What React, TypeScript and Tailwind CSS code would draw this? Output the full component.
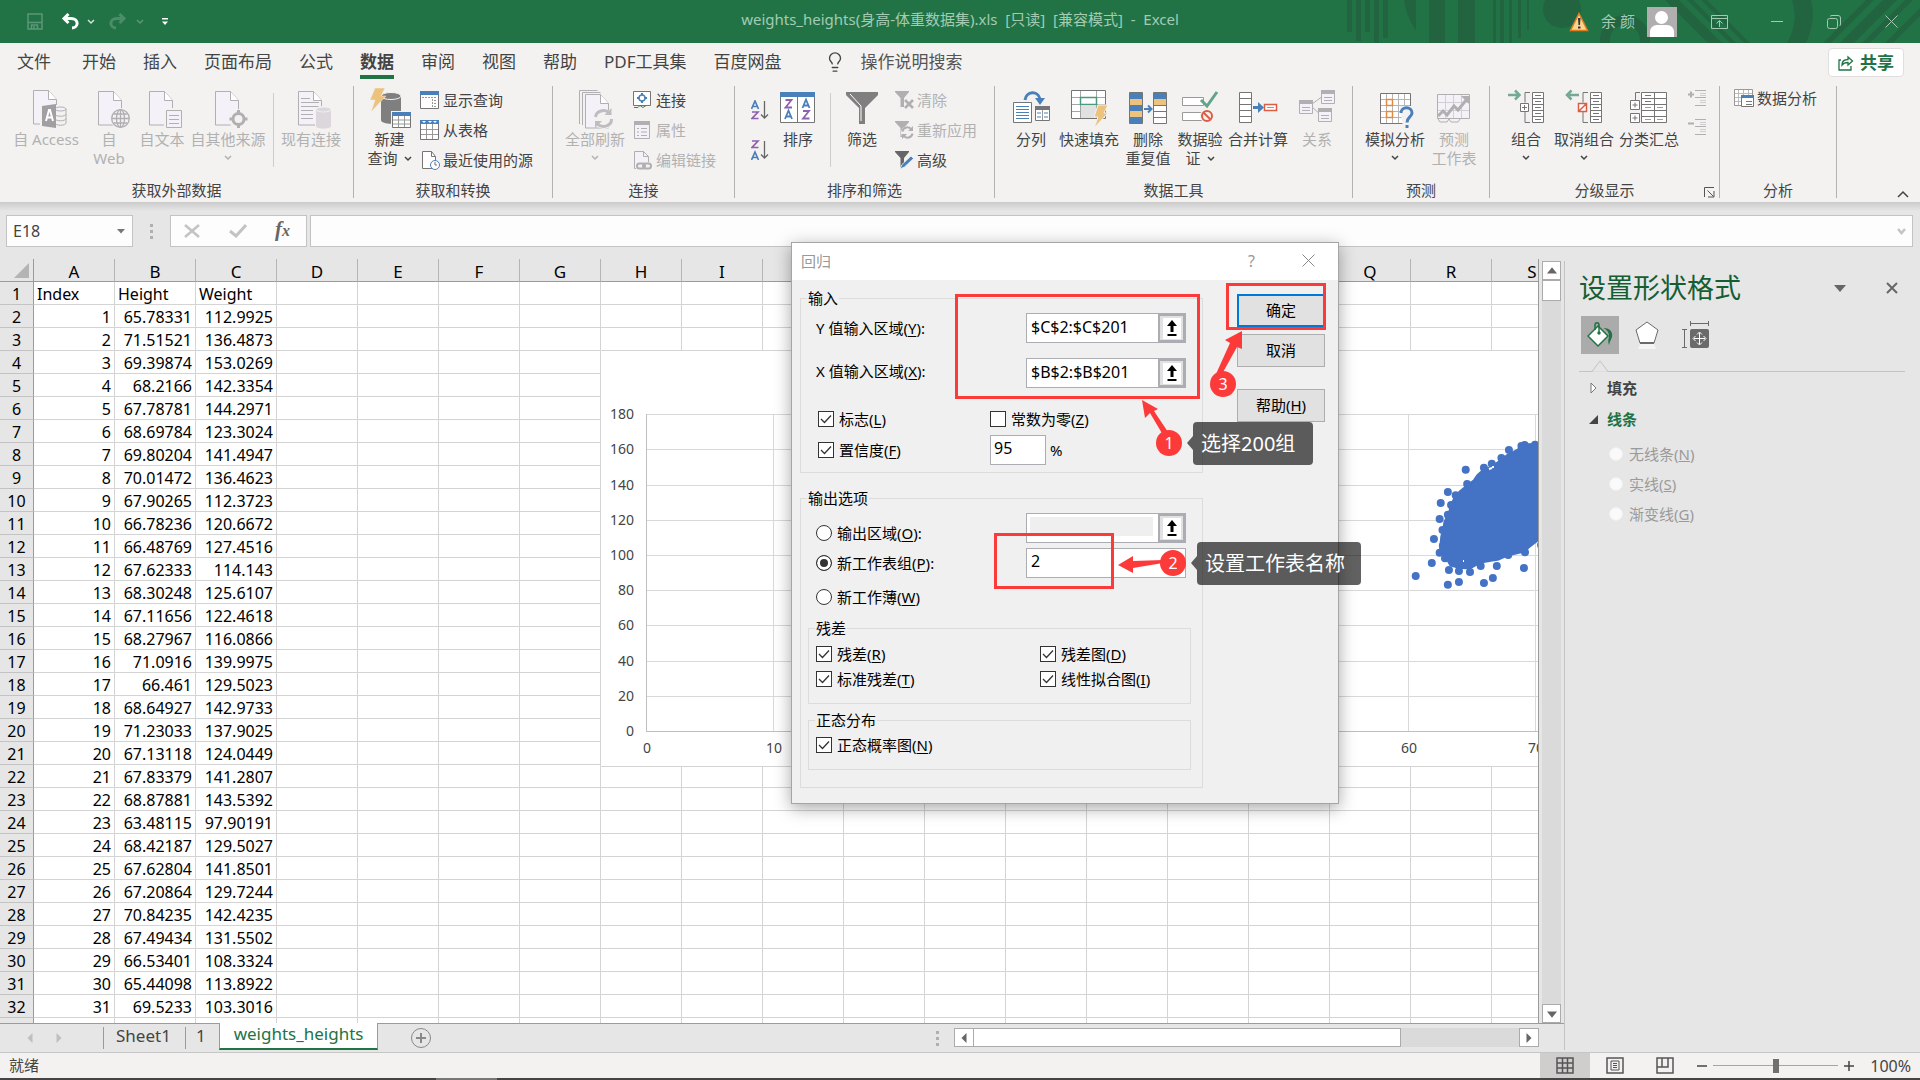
import React from "react";
import { Lightbulb } from "lucide-react";

const GREY = "#b1afb2";
const PALE = "#f5f1f8";
const INK = "#757575";
const BLUE = "#4a80ba";

const rows: string[][] = [
  ["1", "65.78331", "112.9925"], ["2", "71.51521", "136.4873"], ["3", "69.39874", "153.0269"],
  ["4", "68.2166", "142.3354"], ["5", "67.78781", "144.2971"], ["6", "68.69784", "123.3024"],
  ["7", "69.80204", "141.4947"], ["8", "70.01472", "136.4623"], ["9", "67.90265", "112.3723"],
  ["10", "66.78236", "120.6672"], ["11", "66.48769", "127.4516"], ["12", "67.62333", "114.143"],
  ["13", "68.30248", "125.6107"], ["14", "67.11656", "122.4618"], ["15", "68.27967", "116.0866"],
  ["16", "71.0916", "139.9975"], ["17", "66.461", "129.5023"], ["18", "68.64927", "142.9733"],
  ["19", "71.23033", "137.9025"], ["20", "67.13118", "124.0449"], ["21", "67.83379", "141.2807"],
  ["22", "68.87881", "143.5392"], ["23", "63.48115", "97.90191"], ["24", "68.42187", "129.5027"],
  ["25", "67.62804", "141.8501"], ["26", "67.20864", "129.7244"], ["27", "70.84235", "142.4235"],
  ["28", "67.49434", "131.5502"], ["29", "66.53401", "108.3324"], ["30", "65.44098", "113.8922"],
  ["31", "69.5233", "103.3016"], ["", "", ""],
];
const columns = "ABCDEFGHIJKLMNOPQRS".split("");

function Chevron({ className = "" }: { className?: string }) {
  return (
    <svg width="8" height="6" viewBox="0 0 8 6" className={className} fill="none" stroke="currentColor" strokeWidth="1.5">
      <path d="M1 1l3 3 3-3" />
    </svg>
  );
}

/* ---------- ribbon icons ---------- */

function Doc({ x = 7, y = 3, h = 34 }: { x?: number; y?: number; h?: number }) {
  return (
    <g transform={`translate(${x} ${y})`} fill={PALE} stroke={GREY}>
      <path d={`M.5.5h15l8 9V${h}H.5z`} />
      <path d="M15.5.5v9h8" fill="#fff" />
    </g>
  );
}

const AccessIcon = (
  <>
    <Doc x={7} y={2} />
    <path d="M14 17h26v23H14z" fill="#f3f2f1" />
    <g fill="none" stroke={GREY}>
      <ellipse cx="34.500" cy="21" rx="5.500" ry="2" fill={PALE} />
      <path d="M29 21v14c0 3 11 3 11 0V21M29 26c0 3 11 3 11 0M29 30.500c0 3 11 3 11 0" fill="none" />
    </g>
    <path d="M16 18l14-2v24l-14-2z" fill="#a19fa1" />
    <path d="M20 33l3-11h1l3 11M21 29.500h5" fill="none" stroke="#fff" strokeWidth="2" />
  </>
);
const WebIcon = (
  <>
    <Doc x={9} y={3} />
    <circle cx="32" cy="30.500" r="10.500" fill="#f3f2f1" />
    <g fill="none" stroke={GREY} strokeWidth="1.300">
      <circle cx="31.500" cy="30.500" r="8.800" />
      <ellipse cx="31.500" cy="30.500" rx="4" ry="8.800" />
      <path d="M31.500 22v17M23 30.500h17M24.500 26h14M24.500 35h14" />
    </g>
  </>
);
const TextIcon = (
  <>
    <Doc x={7} y={3} />
    <path d="M22 20h19v20H22z" fill="#f3f2f1" />
    <path d="M24.500 22.500h15v17h-15z" fill={PALE} stroke={GREY} />
    <path d="M27 27.500h10M27 31.500h10M27 35.500h10" stroke={GREY} />
  </>
);
const SourceIcon = (
  <>
    <Doc x={7} y={3} />
    <circle cx="30.500" cy="31" r="10" fill="#f3f2f1" />
    <circle cx="30.500" cy="31" r="5.500" fill="none" stroke={GREY} strokeWidth="3" />
    <path d="M30.500 22v4M30.500 36v4M21.500 31h4M35.500 31h4" stroke={GREY} strokeWidth="3" />
  </>
);
const ExistingIcon = (
  <>
    <Doc x={7} y={3} />
    <path d="M10 10.500h9M10 14.500h18M10 18.500h18M10 22.500h12M10 26.500h12M10 30.500h12" stroke={GREY} />
    <path d="M24 21c0-4 17-4 17 0v17c0 4-17 4-17 0z" fill="#f3f2f1" />
    <path d="M25 22v16c0 3.500 15 3.500 15 0V22z" fill="#dbd7dc" />
    <ellipse cx="32.500" cy="21.500" rx="7.500" ry="2.500" fill="#dbd7dc" stroke="#f3f2f1" />
  </>
);
const NewQueryIcon = (
  <>
    <path d="M11 8v24c0 5 20 5 20 0V8z" fill="#7f7f7f" />
    <ellipse cx="21" cy="8" rx="10" ry="3.500" fill="#7f7f7f" stroke="#f3f2f1" />
    <path d="M5 0h10l-4 8h5L1 24l4-12H0z" fill="#ecc27c" stroke="#f3f2f1" strokeWidth=".5" />
    <path d="M21 23h20v18H21z" fill="#f3f2f1" />
    <path d="M22.500 24.500h18v15h-18z" fill="#fff" stroke={INK} />
    <path d="M22 24h19v4H22z" fill={BLUE} />
    <path d="M23 32h17M23 36h17M28.500 28v11M34.500 28v11" stroke="#999" />
  </>
);
const RefreshArrows = (
  <g fill="none" stroke="#bfbdc0" strokeWidth="3">
    <path d="M20.500 29a8 7 0 0 1 14-4M36.500 31a8 7 0 0 1-14 5" />
    <path d="M36.500 20v7h-7zM20 40v-7h7z" fill="#bfbdc0" stroke="none" />
  </g>
);
const RefreshAllIcon = (
  <>
    <path d="M4.500 36V2.500h18M7.500 37V4.500h18" fill="none" stroke={GREY} />
    <Doc x={10} y={6} />
    <circle cx="29" cy="31" r="10" fill="#f3f2f1" />
    {RefreshArrows}
  </>
);
const SortIcon = (
  <>
    <path d="M2.500 4.500h34v30h-34z" fill="#fff" stroke={INK} />
    <path d="M2 4h35v5H2z" fill={BLUE} />
    <path d="M19.500 9v25" stroke={INK} />
    <g fill="none" strokeWidth="1.800">
      <path d="M7.500 12h6l-6 7.500h6.500M25 23h6l-6 7.500h6.500" stroke="#8f5fb0" />
      <path d="M7 31l3.500-8.500L14 31M8.500 28.500h4.500M24.500 20l3.500-8.500 3.500 8.500M26 17.500h4.500" stroke={BLUE} />
    </g>
  </>
);
const FilterIcon = (
  <>
    <path d="M4 4h32v3L23 20v16h-6V20L4 7z" fill="#7f7f7f" />
    <path d="M8 6l11 12v15" fill="none" stroke="#fff" />
  </>
);
const SplitIcon = (
  <>
    <path d="M2.500 14.500h18v20h-18z" fill="#fff" stroke={INK} />
    <path d="M5 18.500h13M5 21.500h13M5 24.500h13M5 27.500h13M5 30.500h13" stroke={BLUE} />
    <path d="M24.500 18.500h14v14h-14z" fill="#fff" stroke={INK} />
    <path d="M24 18h15v4H24z" fill={INK} />
    <path d="M26 25h4M33 25h4M26 29h4M33 29h4" stroke={BLUE} />
    <path d="M31.500 22v10" stroke="#999" />
    <path d="M14 12c1-9 13-10 15-1" fill="none" stroke={BLUE} strokeWidth="3" />
    <path d="M24 10h10l-5 7z" fill={BLUE} />
  </>
);
const FlashIcon = (
  <>
    <path d="M2.500 2.500h34v28h-34z" fill="#fff" stroke={INK} />
    <path d="M3 9.500h33M3 16.500h33M3 23.500h33M11.500 3v27M27.500 3v27" stroke="#a5a5a5" />
    <path d="M11.500 9.500h16v7h-16z" fill="#fff" stroke="#4a9a7c" strokeWidth="1.500" />
    <path d="M12 18h15v12H12z" fill="#e1e1e1" />
    <path d="M29 17h10l-4 8h4L25 40l4-11h-4z" fill="#ecc27c" stroke="#f3f2f1" />
  </>
);
const DedupeIcon = (
  <>
    <path d="M1.500 4.500h13v31h-13z" fill={BLUE} stroke={INK} />
    <path d="M2 11h12v6H2zM2 23h12v6H2z" fill="#ecc27c" />
    <path d="M25.500 4.500h13v31h-13z" fill="#fff" stroke={INK} />
    <path d="M26 5h12v6H26z" fill={BLUE} />
    <path d="M26 11h12v6H26z" fill="#ecc27c" />
    <path d="M26 17.500h12M26 23.500h12M26 29.500h12" stroke={INK} />
    <path d="M16 21h7M20 17.500l3.500 3.500-3.500 3.500" fill="none" stroke={BLUE} strokeWidth="2" />
  </>
);
const ValidateIcon = (
  <>
    <path d="M2.500 9.500h21v8h-21zM2.500 24.500h21v8h-21z" fill="#fff" stroke="#9a9a9a" />
    <path d="M21 12l6 6L37 4" fill="none" stroke="#62a48a" strokeWidth="3" />
    <circle cx="27" cy="28" r="7" fill="#f3f2f1" />
    <circle cx="27" cy="28" r="5" fill="none" stroke="#dc5d44" strokeWidth="2" />
    <path d="M23.500 24.500l7 7" stroke="#dc5d44" strokeWidth="2" />
  </>
);
const ConsolidateIcon = (
  <>
    <path d="M1.500 4.500h12v30h-12z" fill="#fff" stroke={INK} />
    <path d="M2 10.500h11M2 16.500h11M2 22.500h11M2 28.500h11" stroke={INK} />
    <path d="M15 19.500h7" stroke={BLUE} strokeWidth="3" />
    <path d="M20 14l6 5.500-6 5.500z" fill={BLUE} />
    <path d="M26.500 16.500h12v6h-12z" fill="#fff" stroke="#dc5d44" strokeWidth="1.500" />
    <path d="M29 19.500h7" stroke="#999" />
  </>
);
const RelationIcon = (
  <>
    <path d="M15 16L26 8M15 19l9 8" stroke={GREY} />
    {[[24, 2], [2, 12], [21, 20]].map(([x, y]) => (
      <g key={x} transform={`translate(${x} ${y})`}>
        <path d="M.5.5h13v13H.5z" fill={PALE} stroke={GREY} />
        <path d="M0 0h14v4H0z" fill={GREY} />
        <path d="M3 7.500h8M3 10.500h8" stroke={GREY} />
      </g>
    ))}
  </>
);
const WhatIfIcon = (
  <>
    <path d="M5.500 5.500h30v30h-30z" fill="#fff" stroke={INK} />
    <path d="M6 11.500h29M6 17.500h29M6 23.500h29M6 29.500h29M11.500 6v29M17.500 6v29M23.500 6v29M29.500 6v29" stroke="#b5b5b5" />
    <path d="M11.500 11.500h6v6h-6zM11.500 23.500h6v6h-6z" fill="#fff" stroke="#e58a3c" strokeWidth="1.500" />
    <path d="M25 18h14v22H28z" fill="#f3f2f1" />
    <path d="M26 25c0-7 11-7 11 0 0 4-5 4-5 9.500" fill="none" stroke={BLUE} strokeWidth="3" />
    <path d="M30.500 37h3v3h-3z" fill={BLUE} />
  </>
);
const ForecastIcon = (
  <>
    <path d="M3.500 6.500h32v24h-32z" fill={PALE} stroke={GREY} />
    <path d="M4 14.500h31M4 22.500h31M11.500 7v23M19.500 7v23M27.500 7v23" stroke="#d3d0d5" />
    <path d="M4 28l5-5 4 4 7-9 4 4 9-11" fill="none" stroke={GREY} strokeWidth="3" />
    <path d="M27 8h8v8z" fill={GREY} />
    <path d="M4 31l2 3h7l2-3 2 3h7l2-3" fill="none" stroke={GREY} />
  </>
);
const OutlineTable = ({ x }: { x: number }) => (
  <>
    <path d={`M${x}.5 4.500h11v30h-11z`} fill="#fff" stroke={INK} />
    <path d={`M${x} 10.500h12M${x} 16.500h12M${x} 22.500h12M${x} 28.500h12`} stroke={INK} />
    <path d={`M${x + 3} 7.500h6M${x + 3} 13.500h6M${x + 3} 19.500h6M${x + 3} 25.500h6M${x + 3} 31.500h6`} stroke={BLUE} />
  </>
);
const GroupIcon = (
  <>
    <OutlineTable x={26} />
    <path d="M24 4.500h-5v10M19 24v10.500h5" fill="none" stroke={INK} />
    <path d="M14.500 15.500h8v8h-8z" fill="#fff" stroke={INK} />
    <path d="M16 19.500h5M18.500 17v5" stroke={INK} />
    <path d="M2 7h11M9 2.500L13.500 7 9 11.500" fill="none" stroke="#74a995" strokeWidth="2.500" />
  </>
);
const UngroupIcon = (
  <>
    <OutlineTable x={26} />
    <path d="M24 4.500h-5v10M19 24v10.500h5" fill="none" stroke={INK} />
    <path d="M14.500 15.500h8v8h-8zM15 23l7-7" fill="#fff" stroke="#dc5d44" strokeWidth="1.500" />
    <path d="M15 7H4M7.500 2.500L3 7l4.500 4.500" fill="none" stroke="#74a995" strokeWidth="2.500" />
  </>
);
const SubtotalIcon = (
  <>
    <path d="M12.500 4.500h25v30h-25z" fill="#fff" stroke={INK} />
    <path d="M13 10.500h24M13 16.500h24M13 22.500h24M13 28.500h24M25.500 5v29" stroke={INK} />
    <path d="M16 7.500h6M16 13.500h6" stroke={BLUE} />
    <path d="M16 19.500h6M28 19.500h6M16 31.500h6M28 31.500h6" stroke="#e58a3c" />
    <path d="M11 4.500H6.500V12" fill="none" stroke={INK} />
    <path d="M1.500 12.500h9v9h-9zM1.500 25.500h9v9h-9z" fill="#fff" stroke={INK} />
    <path d="M3.500 17h5M6 14.500v5M3.500 30h5M6 27.500v5" stroke={INK} />
  </>
);

/* ---------- ribbon building blocks ---------- */

function Big({ icon, lines, w, off, drop }: { icon: React.ReactNode; lines: string[]; w: string; off?: boolean; drop?: "below" | "inline" }) {
  return (
    <button disabled={off} className={`flex shrink-0 flex-col items-center pt-0.5 ${w} ${off ? "text-[#b1b1b1]" : "text-[#444]"}`}>
      <svg width="40" height="42" viewBox="0 0 40 42" className="shrink-0 overflow-visible">{icon}</svg>
      {lines.map((l, i) => (
        <span key={l} className="flex items-center gap-1.5 whitespace-nowrap leading-[19px]">
          {l}
          {drop === "inline" && i === lines.length - 1 && <Chevron />}
        </span>
      ))}
      {drop === "below" && <Chevron className="mt-1.5" />}
    </button>
  );
}
function Small({ icon, label, off, h = "h-[30px]" }: { icon: React.ReactNode; label: string; off?: boolean; h?: string }) {
  return (
    <button disabled={off} className={`flex items-center gap-[3px] pb-0.5 whitespace-nowrap ${h} ${off ? "text-[#b1b1b1]" : "text-[#444]"}`}>
      <svg width="20" height="20" viewBox="0 0 20 20" className="shrink-0">{icon}</svg>
      {label}
    </button>
  );
}
function Group({ label, w, pad, children, launcher }: { label: string; w: string; pad: string; children: React.ReactNode; launcher?: boolean }) {
  return (
    <section className={`relative flex h-[112px] shrink-0 flex-col border-r border-[#b5b3b1] ${w}`}>
      <div className={`flex flex-1 ${pad}`}>{children}</div>
      <h2 className="text-center leading-4 text-[#444]">{label}</h2>
      {launcher && (
        <button aria-label="分级显示设置" className="absolute right-1 bottom-0">
          <svg width="11" height="11" viewBox="0 0 11 11" fill="none" stroke="#555"><path d="M.5 10V.500H10M3.500 3.500l6 6M10 4v6H4" /></svg>
        </button>
      )}
    </section>
  );
}
const Divider = ({ className = "" }: { className?: string }) => <div className={`mt-[7px] h-[74px] w-px shrink-0 bg-[#cfcdcc] ${className}`} />;

function AZ({ up, label }: { up?: boolean; label: string }) {
  return (
    <button aria-label={label}>
      <svg width="18" height="20" viewBox="0 0 18 20" fill="none" strokeWidth="1.700">
        <g transform={up ? "translate(0 11)" : undefined}><path d="M.500 9L4 1l3.500 8M2 6.500h4" stroke={BLUE} /></g>
        <g transform={up ? "translate(0 -11)" : undefined}><path d="M1 12h6l-6 6.500h6.500" stroke="#8f5fb0" /></g>
        <path d="M13.500 1v17M10 14.500l3.500 3.500 3.500-3.500" stroke="#666" strokeWidth="1.300" />
      </svg>
    </button>
  );
}

const funnel = (c: string) => <path d="M1 1h14v1L10 8v9H6.500V8L1 2z" fill={c} />;

function TitleBar() {
  return (
    <header className="relative flex h-[43px] shrink-0 items-center overflow-hidden bg-[#217346] text-[#a3cbb3]">
      <svg width="580" height="43" viewBox="1340 0 580 43" className="absolute top-0 right-0" fill="#226340">
        <path d="M1347 0h5v32h-5zM1356 0h5v41h-5zM1365 0h5v32h-5zM1374 0h5v43h-5zM1383 0h5v38h-5zM1404 0h12v30c-6-8-10-18-12-30zM1429 0h16v43h-16zM1458 0h17v43h-17zM1493 0h3v43h-3zM1500 0h4v43h-4zM1509 0h3v43h-3zM1518 0h3v38h-3zM1527 0h2v30h-2z" />
        <circle cx="1562" cy="9" r="19" />
        <circle cx="1625" cy="40" r="20" fill="none" stroke="#226340" strokeWidth="10" />
        <path d="M1665 0h14l43 43h-14zM1687 0h6l43 43h-6zM1701 0h6l43 43h-6z" />
        <path d="M1792 0h19c4 16 1 30-5 43h-19c8-14 10-28 5-43zM1883 0h14l-43 43h-14zM1866 0h8l-43 43h-8zM1905 0h8l-43 43h-8zM1920 8v8l-27 27h-8z" />
      </svg>
      <div className="relative flex items-center pl-[27px]">
        <button aria-label="保存" className="text-[#5c9777]">
          <svg width="16" height="17" viewBox="0 0 16 17" fill="none" stroke="currentColor" strokeWidth="1.500"><path d="M1 1h14v15H1zM1 9.500h14M4.500 16v-4h6v4M7 13v3" /></svg>
        </button>
        <button aria-label="撤消" className="ml-[18px] text-white">
          <svg width="18" height="17" viewBox="0 0 18 17" fill="none" stroke="currentColor" strokeWidth="3"><path d="M3 5.500h7c8 0 8 9 1 9.500M7.500 1L3 5.500 7.500 10" /></svg>
        </button>
        <Chevron className="ml-2 text-[#cfe3d7]" />
        <button aria-label="恢复" className="ml-[14px] text-[#4b8c69]">
          <svg width="18" height="17" viewBox="0 0 18 17" fill="none" stroke="currentColor" strokeWidth="3"><path d="M15 5.500H8c-8 0-8 9-1 9.500M10.500 1L15 5.500 10.500 10" /></svg>
        </button>
        <Chevron className="ml-[9px] text-[#5c9777]" />
        <button aria-label="自定义快速访问工具栏" className="ml-[18px]">
          <svg width="6" height="7" viewBox="0 0 6 7" fill="#fff"><path d="M0 0h6v1.500H0zM0 3.500h6L3 7z" /></svg>
        </button>
      </div>
      <h1 className="absolute inset-x-0 top-0 text-center text-[15px] leading-[38px] whitespace-pre">weights_heights(身高-体重数据集).xls  [只读]  [兼容模式]  -  Excel</h1>
      <div className="relative ml-auto flex items-center pr-[22px]">
        <svg width="20" height="20" viewBox="0 0 20 20"><path d="M10 1.500l8.500 17h-17z" fill="#fbd58b" stroke="#e07b1f" strokeWidth="1.500" /><path d="M9 6h2.500l-.5 7H9.500zM9 14.500h2.500v2H9z" fill="#333" /></svg>
        <span className="ml-3 text-[15px]">余 颜</span>
        <svg width="30" height="30" viewBox="0 0 30 30" className="ml-3"><path d="M0 0h30v30H0z" fill="#b0aeae" /><circle cx="14.500" cy="10.500" r="6.500" fill="#fff" /><path d="M3 30V25c0-4 3-7 7-7h10c4 0 7 3 7 7v5z" fill="#fff" /></svg>
        <button aria-label="功能区显示选项" className="ml-[34px]">
          <svg width="17" height="14" viewBox="0 0 17 14" fill="none" stroke="currentColor"><path d="M.500.500h16v13H.500zM.500 3.500h16M8.500 12V6M5.500 8.500l3-3 3 3" /></svg>
        </button>
        <button aria-label="最小化" className="ml-[43px]"><svg width="12" height="12" viewBox="0 0 12 12" stroke="currentColor"><path d="M0 5.500h12" /></svg></button>
        <button aria-label="还原" className="ml-11">
          <svg width="14" height="14" viewBox="0 0 14 14" fill="none" stroke="currentColor"><rect x=".5" y="3.500" width="10" height="10" rx="2" /><path d="M3 1.500c.5-.7 1-1 2-1h6c1.500 0 2.500 1 2.500 2.500v6c0 1-.3 1.500-1 2" /></svg>
        </button>
        <button aria-label="关闭" className="ml-11"><svg width="13" height="13" viewBox="0 0 13 13" stroke="currentColor"><path d="M.500.500l12 12M12.500.500l-12 12" /></svg></button>
      </div>
    </header>
  );
}

function Tabs() {
  const tabs = ["开始", "插入", "页面布局", "公式", "数据", "审阅", "视图", "帮助", "PDF工具集", "百度网盘"];
  return (
    <nav className="flex h-[43px] shrink-0 items-start pt-[5px] text-[17px] leading-[27px] text-[#444]">
      <a href="#file" className="mr-[31px] ml-[17px]">文件</a>
      <div className="flex gap-[27px]">
        {tabs.map((t) => (
          <a key={t} href={`#${t}`} className={t === "数据" ? "border-b-4 border-[#217346] font-bold" : ""}>{t}</a>
        ))}
      </div>
      <label className="ml-[42px] flex items-center gap-[15px]">
        <Lightbulb size={22} strokeWidth={1.5} />
        <input placeholder="操作说明搜索" className="w-40 bg-transparent outline-none placeholder:text-[#555]" />
      </label>
      <button className="mr-4 ml-auto flex h-[29px] items-center gap-1.5 rounded border border-[#e1dfdd] bg-white px-[9px] font-bold text-[#217346]">
        <svg width="16" height="16" viewBox="0 0 16 16" fill="none" stroke="currentColor" strokeWidth="1.300"><path d="M3 5H1v10h12v-4M4 10c0-4 3-5.500 6-5.500V2l4.500 4L10 10V7.500C7 7.500 5.500 8 4 10z" /></svg>
        共享
      </button>
    </nav>
  );
}

function Ribbon() {
  return (
    <div className="flex shrink-0 pb-1 text-[15px]">
      <Group label="获取外部数据" w="w-[354px]" pad="pl-[10px]">
        <Big off w="w-[72px]" lines={["自 Access"]} icon={AccessIcon} />
        <Big off w="w-[54px]" lines={["自", "Web"]} icon={WebIcon} />
        <Big off w="w-[52px]" lines={["自文本"]} icon={TextIcon} />
        <Big off w="w-[80px]" lines={["自其他来源"]} icon={SourceIcon} drop="below" />
        <Divider className="mx-[5px]" />
        <Big off w="w-[64px]" lines={["现有连接"]} icon={ExistingIcon} />
      </Group>
      <Group label="获取和转换" w="w-[199px]" pad="pl-[5px]">
        <Big w="w-[61px]" lines={["新建", "查询"]} icon={NewQueryIcon} drop="inline" />
        <div>
          <Small label="显示查询" icon={<><path d="M.500 1.500h18v17H.500z" fill="#fff" stroke={INK} /><path d="M0 1h19v4H0z" fill={BLUE} /><path d="M2 7.500h15M12.500 9v9M14 10.500h3M14 13.500h3M14 16.500h3" stroke="#999" strokeDasharray="2 1" /></>} />
          <Small label="从表格" icon={<><path d="M.500.500h18v19H.500z" fill="#fff" stroke={INK} /><path d="M0 0h19v4H0z" fill={BLUE} /><path d="M2 1h4L4 3zM8 1h4l-2 2zM13 1h4l-2 2z" fill="#fff" /><path d="M1 9.500h17M1 14.500h17M6.500 4v15M12.500 4v15" stroke="#999" /></>} />
          <Small label="最近使用的源" icon={<><path d="M2.500 1.500h9l4 5v12h-13z" fill="#fff" stroke={INK} /><path d="M11.500 1.500v5h4" fill="none" stroke={INK} /><circle cx="15" cy="15" r="4.500" fill="#fff" stroke={BLUE} /><path d="M15 12v3h2" fill="none" stroke={INK} /></>} />
        </div>
      </Group>
      <Group label="连接" w="w-[182px]" pad="pl-[6px]">
        <Big off w="w-[72px]" lines={["全部刷新"]} icon={RefreshAllIcon} drop="below" />
        <div className="ml-0.5">
          <Small label="连接" icon={<><path d="M.500 1.500h17v14H.500z" fill="#fff" stroke={INK} /><path d="M1 17.500h4l2-2 3 2 3-2" fill="none" stroke="#4f7d57" /><circle cx="9" cy="8" r="3" fill="none" stroke={BLUE} strokeWidth="1.500" /><path d="M9 3v2M9 11v2M4 8h2M12 8h2" stroke={BLUE} strokeWidth="2" /></>} />
          <Small off label="属性" icon={<><path d="M1.500 1.500h15v17h-15z" fill={PALE} stroke={GREY} /><path d="M1 1h16v4H1z" fill={GREY} /><path d="M8 8.500h6M8 12h6M8 15.500h6M4 8.500h2M4 12h2M4 15.500h2" stroke={GREY} /></>} />
          <Small off label="编辑链接" icon={<><path d="M1.500 1.500h9l5 5v12h-14z" fill={PALE} stroke={GREY} /><path d="M10.500 1.500v5h5" fill="none" stroke={GREY} /><path d="M3 12h16v8H3z" fill="#f3f2f1" /><rect x="4" y="13.500" width="8" height="5" rx="2.500" fill="none" stroke={GREY} strokeWidth="2" /><rect x="10" y="13.500" width="8" height="5" rx="2.500" fill="none" stroke={GREY} strokeWidth="2" /></>} />
        </div>
      </Group>
      <Group label="排序和筛选" w="w-[260px]" pad="pl-[16px]">
        <div className="flex flex-col gap-5 pt-3.5"><AZ label="升序" /><AZ up label="降序" /></div>
        <Big w="w-[58px]" lines={["排序"]} icon={SortIcon} />
        <Divider className="mx-[3px]" />
        <Big w="w-[56px]" lines={["筛选"]} icon={FilterIcon} />
        <div className="ml-1">
          <Small off label="清除" icon={<>{funnel(GREY)}<path d="M10 10h9v9h-9z" fill="#f3f2f1" /><path d="M11 10l8 8M19 10l-8 8" stroke={GREY} strokeWidth="2.500" /></>} />
          <Small off label="重新应用" icon={<>{funnel(GREY)}<circle cx="13.500" cy="12.500" r="6.500" fill="#f3f2f1" /><path d="M8.500 11.500a5 5 0 0 1 9-2M18.500 13.500a5 5 0 0 1-9 2" fill="none" stroke={GREY} strokeWidth="2" /><path d="M19 6v5h-5zM8 19v-5h5z" fill={GREY} /></>} />
          <Small label="高级" icon={<>{funnel("#666")}<path d="M6 19l2-4.500L17 6l2.500 2.500L10.500 17z" fill={BLUE} stroke="#f3f2f1" strokeWidth=".8" /></>} />
        </div>
      </Group>
      <Group label="数据工具" w="w-[358px]" pad="pl-[11px]">
        <Big w="w-[50px]" lines={["分列"]} icon={SplitIcon} />
        <Big w="w-[66px]" lines={["快速填充"]} icon={FlashIcon} />
        <Big w="w-[52px]" lines={["删除", "重复值"]} icon={DedupeIcon} />
        <Big w="w-[52px]" lines={["数据验", "证"]} icon={ValidateIcon} drop="inline" />
        <Big w="w-[64px]" lines={["合并计算"]} icon={ConsolidateIcon} />
        <Big off w="w-[54px]" lines={["关系"]} icon={RelationIcon} />
      </Group>
      <Group label="预测" w="w-[137px]" pad="pl-[10px]">
        <Big w="w-[64px]" lines={["模拟分析"]} icon={WhatIfIcon} drop="below" />
        <Big off w="w-[54px]" lines={["预测", "工作表"]} icon={ForecastIcon} />
      </Group>
      <Group label="分级显示" w="w-[230px]" pad="pl-[10px]" launcher>
        <Big w="w-[52px]" lines={["组合"]} icon={GroupIcon} drop="below" />
        <Big w="w-[64px]" lines={["取消组合"]} icon={UngroupIcon} drop="below" />
        <Big w="w-[66px]" lines={["分类汇总"]} icon={SubtotalIcon} />
        <div className="ml-1.5 flex flex-col gap-[13px] pt-1">
          {[true, false].map((plus) => (
            <button key={String(plus)} disabled aria-label={plus ? "显示明细数据" : "隐藏明细数据"}>
              <svg width="18" height="16" viewBox="0 0 18 16" stroke={GREY}>
                <path d="M7 .500h11M7 7.500h11M7 15.500h11" /><path d="M12 3.500h6M12 5.500h6M12 10.500h6M12 12.500h6" stroke="#cfcdd0" />
                <path d={plus ? "M0 4.500h6M3 1.500v6" : "M0 4.500h6"} strokeWidth="2" />
              </svg>
            </button>
          ))}
        </div>
      </Group>
      <Group label="分析" w="w-[117px]" pad="pl-[14px]">
        <Small h="h-[26px]" label="数据分析" icon={<><path d="M.500 1.500h18v16H.500z" fill="#fff" stroke="#999" /><path d="M1 5.500h17M1 9.500h17M1 13.500h17M4.500 2v15M9.500 2v15M14.500 2v15" stroke="#bbb" /><path d="M7.500 7.500h12v11h-12z" fill="#fff" stroke={INK} /><path d="M7 7h13v3H7z" fill={BLUE} /><path d="M12 13.500h6M12 16.500h6" stroke="#777" /></>} />
      </Group>
      <button aria-label="折叠功能区" className="mr-[11px] ml-auto self-end text-[#444]">
        <svg width="12" height="8" viewBox="0 0 12 8" fill="none" stroke="currentColor" strokeWidth="1.500"><path d="M1 7l5-5 5 5" /></svg>
      </button>
    </div>
  );
}

function FormulaBar() {
  return (
    <div className="flex h-[57px] shrink-0 bg-[linear-gradient(#cbcbcb,#e6e6e6_9px)] pt-[13px] pr-[7px] pb-3 pl-1.5">
      <div className="flex w-[127px] items-center border border-[#c3c3c3] bg-[#fdfdfd] pr-[7px] pl-1.5">
        <input aria-label="名称框" defaultValue="E18" className="min-w-0 flex-1 bg-transparent text-base text-[#444] outline-none" />
        <svg width="8" height="5" viewBox="0 0 8 5" fill="#777"><path d="M0 0h8L4 4.500z" /></svg>
      </div>
      <div className="flex w-[37px] flex-col items-center justify-center gap-[3px]">
        {[0, 1, 2].map((i) => <span key={i} className="size-[3px] bg-[#b0b0b0]" />)}
      </div>
      <div className="flex w-[137px] items-center justify-between border border-[#c3c3c3] bg-[#fdfdfd] pr-4 pl-[13px]">
        <button aria-label="取消输入"><svg width="16" height="14" viewBox="0 0 16 14" stroke="#c3c3c3" strokeWidth="2.500"><path d="M1 1l14 12M15 1L1 13" /></svg></button>
        <button aria-label="确认输入"><svg width="18" height="14" viewBox="0 0 18 14" fill="none" stroke="#c3c3c3" strokeWidth="3"><path d="M1 7l6 5L17 1" /></svg></button>
        <button aria-label="插入函数" className="font-['Liberation_Serif',serif] text-[21px] leading-none font-bold text-[#666] italic">f<span className="text-base">x</span></button>
      </div>
      <label className="ml-[3px] flex flex-1 items-center border border-[#c3c3c3] bg-[#fdfdfd] pr-1.5">
        <input aria-label="编辑栏" className="flex-1 bg-transparent px-2 outline-none" />
        <svg width="9" height="7" viewBox="0 0 9 7" fill="none" stroke="#c3c3c3" strokeWidth="2.500"><path d="M1 1l3.500 4L8 1" /></svg>
      </label>
    </div>
  );
}

/* Scatter outline and marker centres, in chart units of 1/2.8 px by 1/3 px. */
const hull: number[][] = [[512, 672], [460, 675], [440, 692], [415, 705], [395, 722], [368, 742], [345, 752], [330, 766], [320, 782], [298, 800], [280, 816], [268, 830], [256, 855], [250, 882], [238, 905], [234, 930], [229, 950], [226, 985], [240, 1008], [254, 1035], [278, 1042], [307, 1044], [338, 1026], [370, 1020], [385, 1018], [415, 1004], [460, 993], [475, 978], [497, 960], [512, 956]];
const dots: number[][] = [[296, 749], [246, 816], [226, 849], [201, 1029], [156, 1068], [246, 1094], [277, 1086], [347, 1089], [372, 1074], [459, 1044], [461, 675], [452, 678], [417, 690], [396, 714], [369, 731], [347, 743], [300, 792], [268, 826], [255, 855], [223, 897], [246, 884], [231, 930], [207, 957], [232, 977], [223, 998], [238, 1015], [249, 1050], [277, 1053], [308, 1056], [338, 1038], [383, 1038], [415, 1005], [462, 997], [490, 674], [507, 975]];
const px = (p: number[]) => [1360 + p[0] / 2.8 - 600, 220 + p[1] / 3 - 350];

function Chart() {
  return (
    <svg width="1100" height="417" viewBox="0 0 1100 417" className="absolute top-[91px] left-[600px] bg-white font-['Noto_Sans',sans-serif] text-[14px]" fill="#444" role="img" aria-label="身高与体重散点图">
      <path d="M1100 .5H.5v416H1100" fill="none" stroke="#d4d4d4" />
      {[0, 1, 2, 3, 4, 5, 6, 7, 8, 9].map((i) => {
        const y = Math.round(381 - i * 35.2);
        return (
          <g key={i}>
            <path d={`M46 ${y}.5H1062`} stroke={i ? "#d9d9d9" : "#bfbfbf"} />
            <text x="34" y={y + 5} textAnchor="end">{i * 20}</text>
          </g>
        );
      })}
      {[0, 1, 2, 3, 4, 5, 6, 7].map((i) => (
        <g key={i}>
          <path d={`M${46 + i * 127}.5 64V381`} stroke={i ? "#d9d9d9" : "#bfbfbf"} />
          <text x={47 + i * 127} y="403" textAnchor="middle">{i * 10}</text>
        </g>
      ))}
      <path d={"M" + hull.map((p) => px(p).join(" ")).join("L") + "z"} fill="#4472c4" stroke="#4472c4" strokeWidth="3" strokeLinejoin="round" />
      {dots.map((p, i) => <circle key={i} cx={px(p)[0]} cy={px(p)[1]} r="4" fill="#4472c4" />)}
      <path d="M889 119l3-1M892 117h2M863 211h1" stroke="#fff" strokeWidth="2" />
    </svg>
  );
}

function Sheet() {
  return (
    <div className="relative min-w-0 flex-1 overflow-hidden border-r border-[#9b9b9b] bg-white">
      <table className="w-[1572px] table-fixed border-separate border-spacing-0 text-base leading-[19px] text-black">
        <thead>
          <tr className="h-[23px] bg-[#e6e6e6]">
            <th className="w-[34px] border-r border-b border-[#9b9b9b] p-0">
              <svg width="15" height="15" viewBox="0 0 15 15" className="mr-1 ml-auto block"><path d="M15 0v15H0z" fill="#b4b4b4" /></svg>
            </th>
            {columns.map((c) => <th key={c} className="w-[81px] border-r border-b border-r-[#b5b5b5] border-b-[#9b9b9b] p-0 pt-1 text-[17px] leading-[18px] font-normal">{c}</th>)}
          </tr>
        </thead>
        <tbody>
          {[["Index", "Height", "Weight"], ...rows].map((r, i) => (
            <tr key={i} className="h-[23px]">
              <th className="border-r border-b border-r-[#9b9b9b] border-b-[#c3c3c3] bg-[#e6e6e6] p-0 pt-[3px] font-normal">{i < 32 ? i + 1 : ""}</th>
              {columns.map((c, j) => (
                <td key={c} className={`border-r border-b border-[#d4d4d4] px-[3px] pt-[3px] pb-0 whitespace-nowrap ${i ? "text-right" : "text-left"}`}>{r[j] ?? ""}</td>
              ))}
            </tr>
          ))}
        </tbody>
      </table>
      <Chart />
    </div>
  );
}

const Arrow = ({ d }: { d: string }) => <svg width="10" height="10" viewBox="0 0 8 8" fill="#666"><path d={d} /></svg>;
const UP = "M0 6h8L4 1z", DOWN = "M0 2h8L4 7z", LEFT = "M6 0v8L2 4z", RIGHT = "M2 0v8l4-4z";

function VScroll() {
  return (
    <div className="mt-0.5 mr-[3px] ml-[3px] flex w-[19px] shrink-0 flex-col bg-[#dadada]">
      <button aria-label="向上滚动" className="grid h-[19px] place-items-center border border-[#ababab] bg-white"><Arrow d={UP} /></button>
      <div className="h-[21px] border border-[#ababab] bg-white" />
      <button aria-label="向下滚动" className="mt-auto grid h-[19px] place-items-center border border-[#ababab] bg-white"><Arrow d={DOWN} /></button>
    </div>
  );
}

function SheetTabs() {
  return (
    <div className="flex h-[28px] shrink-0 text-[17px] text-[#444]">
      <div className="flex w-[103px] items-center gap-[19px] pl-[25px]">
        <button aria-label="上一张" className="opacity-30"><Arrow d={LEFT} /></button>
        <button aria-label="下一张" className="opacity-30"><Arrow d={RIGHT} /></button>
      </div>
      <button className="mt-[3px] h-[22px] border-l border-[#9b9b9b] pr-[14px] pl-3 leading-5">
        <span className="relative bottom-0.5">Sheet1</span>
      </button>
      <button className="mt-[3px] h-[22px] border-l border-[#9b9b9b] pr-[13px] pl-[10px] leading-5">
        <span className="relative bottom-0.5">1</span>
      </button>
      <button className="-mt-px h-[27px] border-x border-b-2 border-x-[#9b9b9b] border-b-[#217346] bg-white px-[14px] pb-1 text-[17px] leading-5 text-[#217346]">weights_heights</button>
      <button aria-label="新工作表" className="ml-[33px] self-center">
        <svg width="20" height="20" viewBox="0 0 20 20" fill="none" stroke="#888"><circle cx="10" cy="10" r="9.500" /><path d="M5 10h10M10 5v10" strokeWidth="2" /></svg>
      </button>
      <div className="mr-[15px] ml-auto flex flex-col justify-center gap-[3px]">
        {[0, 1, 2].map((i) => <span key={i} className="size-[3px] bg-[#b0b0b0]" />)}
      </div>
      <div className="mt-1 mr-[25px] flex h-[19px] w-[585px] bg-[#dadada]">
        <button aria-label="向左滚动" className="grid w-5 place-items-center border border-[#ababab] bg-white"><Arrow d={LEFT} /></button>
        <div className="w-[427px] border-y border-r border-[#ababab] bg-white" />
        <button aria-label="向右滚动" className="ml-auto grid w-5 place-items-center border border-[#ababab] bg-white"><Arrow d={RIGHT} /></button>
      </div>
    </div>
  );
}

function Pane() {
  return (
    <aside className="my-[2px] w-[356px] shrink-0 border-l border-[#c3c3c3] pl-[14px] text-[15px]">
      <div className="flex items-center pt-[7px] pr-[22px]">
        <h2 className="text-[27px] leading-10 text-[#155e34]">设置形状格式</h2>
        <button aria-label="任务窗格选项" className="ml-auto"><svg width="12" height="7" viewBox="0 0 12 7" fill="#666"><path d="M0 0h12L6 7z" /></svg></button>
        <button aria-label="关闭窗格" className="ml-10"><svg width="12" height="12" viewBox="0 0 12 12" stroke="#666" strokeWidth="2"><path d="M1 1l10 10M11 1L1 11" /></svg></button>
      </div>
      <div className="mt-2 flex items-center gap-4 pl-0.5">
        <button aria-label="填充与线条" className="grid h-[38px] w-[38px] place-items-center bg-[#ababab]">
          <svg width="26" height="26" viewBox="0 0 26 26" fill="none" stroke="#217346" strokeWidth="1.500"><path d="M11 4l10 10-10 10L1 14z" fill="#fff" /><path d="M8 8V3c0-3 4-3 4 0v8" /><circle cx="12" cy="11" r="1" fill="#217346" /><path d="M16 6c8 0 10 5 9 9-.5 2-2 4-3 8-1-3-1-5 0-8 0-4-1-7-6-9z" fill="#217346" stroke="none" /></svg>
        </button>
        <button aria-label="效果">
          <svg width="24" height="28" viewBox="0 0 24 28" fill="#fff" stroke="#6a6a6a"><path d="M12 1l11 8-4 13H5L1 9z" /><path d="M5 23l-2 5h18l-2-5z" fill="#f4f4f4" stroke="none" /><path d="M5 22h14" strokeWidth="2" /></svg>
        </button>
        <button aria-label="大小与属性" className="ml-[7px]">
          <svg width="27" height="28" viewBox="0 0 27 28" fill="none" stroke="#6a6a6a"><path d="M9 2.500h17M8.500 0v5M26.500 0v5M2.500 9v17M0 8.500h5M0 26.500h5" /><rect x="8" y="8" width="19" height="19" rx="2" fill="#6a6a6a" stroke="none" /><path d="M12 17.500h11M17.500 12v11" stroke="#fff" /><path d="M13.500 15l-2.500 2.500 2.500 2.500M21.500 15l2.500 2.500-2.500 2.500M15 13.500l2.500-2.500 2.500 2.500M15 21.500l2.500 2.500 2.500-2.500" stroke="#fff" /></svg>
        </button>
      </div>
      <div className="relative mt-[17px] mr-[15px] h-px bg-[#c3c3c3]">
        <svg width="18" height="12" viewBox="0 0 18 12" className="absolute bottom-0 left-3 fill-[#e6e6e6] stroke-[#c3c3c3]"><path d="M1 11.500L9 1l8 10.500" /><path d="M2 12h14" className="stroke-[#e6e6e6]" /></svg>
      </div>
      <button className="mt-0.5 flex h-7 items-center gap-[10px] pl-[10px] font-bold text-[#444]">
        <svg width="8" height="12" viewBox="0 0 8 12" fill="#fff" stroke="#777"><path d="M2 1l5 5-5 5z" /></svg>填充
      </button>
      <button className="mt-[3px] flex h-7 items-center gap-[9px] pl-[10px] font-bold text-[#217346]">
        <svg width="9" height="9" viewBox="0 0 9 9" fill="#444"><path d="M9 0v9H0z" /></svg>线条
      </button>
      <div className="pt-1.5 pl-[30px]">
        {[["无线条", "N"], ["实线", "S"], ["渐变线", "G"]].map(([t, k]) => (
          <label key={k} className="flex h-[30px] items-center gap-[6px] text-[#9a9a9a]">
            <input type="radio" name="line" disabled className="size-[14px] appearance-none rounded-full border border-[#efefef] bg-[#fafafa]" />
            <span>{t}(<u>{k}</u>)</span>
          </label>
        ))}
      </div>
    </aside>
  );
}

function StatusBar() {
  return (
    <footer className="shrink-0">
      <div className="flex h-[26px] items-center border-t border-[#c6c6c6] bg-[#f3f2f1] text-[15px] text-[#444]">
        <span className="pl-[9px]">就绪</span>
        <div className="ml-auto flex h-full">
          {["普通", "页面布局", "分页预览"].map((n, i) => (
            <button key={n} aria-label={n} className={`grid w-[50px] place-items-center ${i === 0 ? "bg-[#cfcecd]" : ""}`}>
              <svg width="18" height="17" viewBox="0 0 18 17" fill="none" stroke="#555" strokeWidth="1.500">
                <path d="M1 1h16v15H1z" />
                {i === 0 && <path d="M1 6h16M1 11h16M6.500 1v15M11.500 1v15" />}
                {i === 1 && <path d="M5 4h8v9H5zM7 6.500h4M7 8.500h4M7 10.500h4" strokeWidth="1" />}
                {i === 2 && <path d="M6 1v9h6V1M1 10h5" />}
              </svg>
            </button>
          ))}
        </div>
        <button aria-label="缩小" className="ml-[7px]"><svg width="10" height="10" viewBox="0 0 10 10" stroke="#444"><path d="M0 5h10" strokeWidth="1.500" /></svg></button>
        <input aria-label="显示比例" type="range" defaultValue="50" className="mx-1.5 h-[14px] w-[125px] appearance-none bg-[linear-gradient(#a5a5a5,#a5a5a5)] bg-[length:100%_1px] bg-center bg-no-repeat [&::-webkit-slider-thumb]:h-[14px] [&::-webkit-slider-thumb]:w-[6px] [&::-webkit-slider-thumb]:appearance-none [&::-webkit-slider-thumb]:bg-[#707070]" />
        <button aria-label="放大"><svg width="10" height="10" viewBox="0 0 10 10" stroke="#444"><path d="M0 5h10M5 0v10" strokeWidth="1.500" /></svg></button>
        <span className="mr-[9px] ml-4 text-base">100%</span>
      </div>
      <div className="flex h-0.5 bg-[#474344]"><span className="ml-[436px] w-[61px] bg-[#777]" /></div>
    </footer>
  );
}

/* ---------- regression dialog ---------- */

function Mn({ t, k, s = "" }: { t: string; k: string; s?: string }) {
  return <span>{t}(<u className="underline-offset-2">{k}</u>){s}</span>;
}
function Check({ t, k, on, className = "" }: { t: string; k: string; on?: boolean; className?: string }) {
  return (
    <label className={`flex h-5 items-center gap-[5px] ${className}`}>
      <span className="grid shrink-0">
        <input type="checkbox" defaultChecked={on} className="peer size-4 appearance-none border border-[#333] bg-white [grid-area:1/1]" />
        <svg width="16" height="16" viewBox="0 0 16 16" className="pointer-events-none hidden [grid-area:1/1] peer-checked:block" fill="none" stroke="#333" strokeWidth="1.300"><path d="M3 8l3.500 3.500L13 4.500" /></svg>
      </span>
      <Mn t={t} k={k} />
    </label>
  );
}
function Radio({ t, k, s, on, className = "" }: { t: string; k: string; s?: string; on?: boolean; className?: string }) {
  return (
    <label className={`flex h-5 items-center gap-[5px] ${className}`}>
      <input type="radio" name="output" defaultChecked={on} className="size-4 appearance-none rounded-full border border-[#333] bg-white checked:bg-[#333] checked:shadow-[inset_0_0_0_3px_white]" />
      <Mn t={t} k={k} s={s} />
    </label>
  );
}
function RefInput({ id, value, off, label }: { id: string; value?: string; off?: boolean; label?: string }) {
  return (
    <div className="flex h-[30px] w-[160px] border border-[#abadb3] bg-white">
      <input id={id} aria-label={label} defaultValue={value} disabled={off} className={`min-w-0 flex-1 text-base leading-5 outline-none ${off ? "m-[3px] mr-[5px] mb-1.5 bg-[#efefef]" : "pb-0.5 pl-1"}`} />
      <button aria-label="选择区域" className="grid w-[27px] place-items-center border-2 border-[#abadb3] bg-[#e1e1e1]">
        <svg width="18" height="21" viewBox="0 0 18 21"><path d="M0 0h18v21H0z" fill="#fff" /><path d="M4 8l5-6 5 6h-3.500v6h-3V8zM4.500 16h9v2h-9z" fill="#000" /></svg>
      </button>
    </div>
  );
}
const btn = "h-[33px] border border-[#adadad] bg-[#e1e1e1] pb-0.5";
const box = "border border-[#dcdcdc]";

function RegressionDialog() {
  return (
    <div role="dialog" aria-label="回归" className="absolute top-[242px] left-[791px] w-[548px] border border-[#a5a5a5] bg-[#f0f0f0] text-[15px] leading-5 text-black shadow-[0_4px_16px_rgba(0,0,0,0.35)]">
      <div className="flex h-[37px] items-center bg-white pr-[23px] pb-0.5 pl-[9px] text-[#999]">
        <span>回归</span>
        <button aria-label="帮助" className="ml-auto text-base">?</button>
        <button aria-label="关闭" className="ml-[47px]"><svg width="13" height="13" viewBox="0 0 13 13" stroke="#888"><path d="M.500.500l12 12M12.500.500l-12 12" /></svg></button>
      </div>
      <div className="flex pt-2 pb-[15px] pl-2">
        <div className="w-[403px]">
          <fieldset className={`${box} pb-[7px] pl-[15px]`}>
            <legend className="-ml-[9px] px-px">输入</legend>
            <div className="flex items-center pt-[5px]"><label htmlFor="ref-y" className="w-[210px]"><Mn t="Y 值输入区域" k="Y" s=":" /></label><RefInput id="ref-y" value="$C$2:$C$201" /></div>
            <div className="mt-[15px] flex items-center"><label htmlFor="ref-x" className="w-[210px] pb-1"><Mn t="X 值输入区域" k="X" s=":" /></label><RefInput id="ref-x" value="$B$2:$B$201" /></div>
            <div className="mt-[21px] flex pl-0.5"><Check on t="标志" k="L" className="w-[172px]" /><Check t="常数为零" k="Z" /></div>
            <div className="mt-1.5 flex items-center pl-0.5">
              <Check on t="置信度" k="F" className="w-[172px]" />
              <label className="flex items-center gap-1"><input defaultValue="95" className="h-[30px] w-[56px] border border-[#abadb3] bg-white px-[3px] pb-1 text-base outline-none" />%</label>
            </div>
          </fieldset>
          <fieldset className={`${box} mt-[15px] pb-[17px]`}>
            <legend className="ml-[6px] px-px">输出选项</legend>
            <div className="pl-[15px]">
              <div className="flex items-end pt-[5px]"><Radio t="输出区域" k="O" s=":" className="w-[210px]" /><RefInput off id="ref-out" label="输出区域" /></div>
              <div className="mt-[5px] flex items-center"><Radio on t="新工作表组" k="P" s=":" className="w-[210px]" /><input aria-label="新工作表组名称" defaultValue="2" className="h-[30px] w-[160px] border border-[#abadb3] bg-white px-1 pb-1 text-base outline-none" /></div>
              <Radio t="新工作薄" k="W" className="mt-[9px]" />
            </div>
            <fieldset className={`${box} mt-[11px] ml-[7px] w-[383px] pb-3.5`}>
              <legend className="ml-[6px] px-px">残差</legend>
              <div className="grid grid-cols-[224px_1fr] gap-y-[5px] pt-1.5 pl-[7px]">
                <Check on t="残差" k="R" /><Check on t="残差图" k="D" />
                <Check on t="标准残差" k="T" /><Check on t="线性拟合图" k="I" />
              </div>
            </fieldset>
            <fieldset className={`${box} mt-[6px] ml-[7px] w-[383px] pb-2.5`}>
              <legend className="ml-[6px] px-px">正态分布</legend>
              <div className="pt-[5px] pb-1 pl-[7px]"><Check on t="正态概率图" k="N" /></div>
            </fieldset>
          </fieldset>
        </div>
        <div className="mt-1.5 ml-[34px] flex w-[88px] flex-col">
          <button className="h-[33px] border-2 border-[#0078d7] bg-[#e1e1e1] pb-0.5">确定</button>
          <button className={`${btn} mt-[7px]`}>取消</button>
          <button className={`${btn} mt-[22px]`}><Mn t="帮助" k="H" /></button>
        </div>
      </div>
    </div>
  );
}

const badge = "absolute grid size-[26px] place-items-center rounded-full bg-[#fc3a3a] text-base leading-none text-white";
const tip = "absolute flex h-[43px] items-center rounded bg-black/62 pl-2 text-[20px] text-white";
const TipArrow = () => <svg width="6" height="14" viewBox="0 0 6 14" className="absolute top-[14px] -left-1.5 fill-black/62"><path d="M6 0v14L0 7z" /></svg>;

function Annotations() {
  return (
    <div className="pointer-events-none absolute top-0 left-0">
      <div className="absolute top-[294px] left-[955px] h-[105px] w-[245px] border-3 border-[#fc3a3a]" />
      <div className="absolute top-[283px] left-[1226px] h-[47px] w-[100px] border-3 border-[#fc3a3a]" />
      <div className="absolute top-[533px] left-[994px] h-[56px] w-[120px] border-3 border-[#fc3a3a]" />
      <svg width="260" height="260" viewBox="1110 330 260 260" className="absolute top-[330px] left-[1110px]" fill="#fc3a3a">
        <path d="M1142 400l16 9-4 2 14 21-5 3-13-22-5 5z" />
        <path d="M1242 331v18l-5-2-15 27h-6l14-31-5-3z" />
        <path d="M1118 565l15-9v5l30-1v3l-30 5v5z" />
      </svg>
      <span className={`${badge} top-[430px] left-[1156px]`}>1</span>
      <span className={`${badge} top-[371px] left-[1210px]`}>3</span>
      <span className={`${badge} top-[550px] left-[1160px]`}>2</span>
      <div className={`${tip} top-[422px] left-[1193px] w-[120px]`}><TipArrow />选择200组</div>
      <div className={`${tip} top-[542px] left-[1197px] w-[164px]`}><TipArrow />设置工作表名称</div>
    </div>
  );
}

export default function App() {
  return (
    <div className="relative flex h-screen flex-col overflow-hidden bg-[#e6e6e6] font-['Noto_Sans','Noto_Sans_CJK_SC',sans-serif]">
      <TitleBar />
      <div className="shrink-0 bg-[#f3f2f1]">
        <Tabs />
        <Ribbon />
      </div>
      <FormulaBar />
      <main className="flex min-h-0 flex-1">
        <div className="flex min-w-0 flex-1 flex-col">
          <div className="flex min-h-0 flex-1 border-b border-[#9b9b9b]">
            <Sheet />
            <VScroll />
          </div>
          <SheetTabs />
        </div>
        <Pane />
      </main>
      <StatusBar />
      <RegressionDialog />
      <Annotations />
    </div>
  );
}
